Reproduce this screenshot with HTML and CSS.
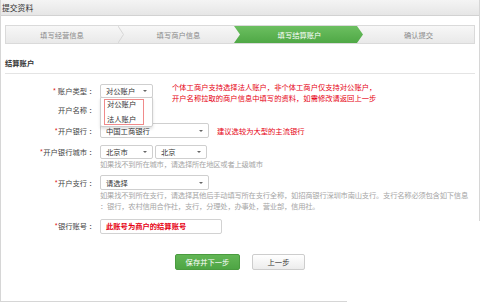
FILE: index.html
```html
<!DOCTYPE html>
<html lang="zh-CN">
<head>
    <meta charset="UTF-8">
    <meta name="viewport" content="width=device-width, initial-scale=1.0">
    <title>提交资料</title>
    <link rel="stylesheet" href="styles.css">
</head>
<body>
    <div class="panel">
        <div class="panel-head">提交资料</div>

        <div class="panel-body">
            <div class="steps">
                <div class="step">
                    <span class="step-text">填写经营信息</span>
                    <svg class="step-sep" width="6" height="17" viewBox="0 0 6 17"><polyline points="0,0 5.5,8.5 0,17" fill="none" stroke="#d6d6d6" stroke-width="1"/></svg>
                </div>
                <div class="step">
                    <span class="step-text">填写商户信息</span>
                </div>
                <div class="step step-active">
                    <span class="step-text">填写结算账户</span>
                </div>
                <div class="step">
                    <span class="step-text">确认提交</span>
                </div>
            </div>

            <h2 class="section-title">结算账户</h2>

            <div class="form">
                <div class="row row-fixed">
                    <label class="label"><span class="req">*</span> 账户类型 ：</label>
                    <div class="control">
                        <div class="select-wrap">
                            <div class="select select-sm"><span>对公账户</span><i class="caret"></i></div>
                            <div class="dropdown">
                                <div class="dropdown-mark">
                                    <div class="option">对公账户</div>
                                    <div class="option option-2">法人账户</div>
                                </div>
                            </div>
                        </div>
                        <p class="note note-wide">个体工商户支持选择法人账户，非个体工商户仅支持对公账户，<br>开户名称拉取的商户信息中填写的资料，如需修改请返回上一步</p>
                    </div>
                </div>

                <div class="row row-name">
                    <label class="label">开户名称 ：</label>
                    <div class="control"></div>
                </div>

                <div class="row row-bank">
                    <label class="label"><span class="req">*</span>开户银行 ：</label>
                    <div class="control">
                        <div class="select select-lg"><span>中国工商银行</span><i class="caret"></i></div>
                        <p class="note note-bank">建议选较为大型的主流银行</p>
                    </div>
                </div>

                <div class="row row-city">
                    <label class="label"><span class="req">*</span>开户银行城市 ：</label>
                    <div class="control-col">
                        <div class="control">
                            <div class="select select-sm"><span>北京市</span><i class="caret"></i></div>
                            <div class="select select-city"><span>北京</span><i class="caret"></i></div>
                        </div>
                        <p class="hint">如果找不到所在城市，请选择所在地区或者上级城市</p>
                    </div>
                </div>

                <div class="row row-branch">
                    <label class="label"><span class="req">*</span>开户支行 ：</label>
                    <div class="control-col">
                        <div class="control">
                            <div class="select select-lg"><span>请选择</span><i class="caret"></i></div>
                        </div>
                        <p class="hint">如果找不到所在支行，请选择其他后手动填写所在支行全称，如招商银行深圳市南山支行。支行名称必须包含如下信息<br>：银行，农村信用合作社，支行，分理处，办事处，营业部，信用社。</p>
                    </div>
                </div>

                <div class="row row-account">
                    <label class="label"><span class="req">*</span>银行账号 ：</label>
                    <div class="control">
                        <div class="input">此账号为商户的结算账号</div>
                    </div>
                </div>

                <div class="actions">
                    <button class="btn btn-primary">保存并下一步</button>
                    <button class="btn btn-default">上一步</button>
                </div>
            </div>
        </div>
    </div>
</body>
</html>
```

FILE: styles.css
```css
body {
    margin: 0;
    font-family: "Noto Sans CJK SC", "Liberation Sans", sans-serif;
    font-size: 7.3px;
    color: #444;
    background-color: #fff;
}

.panel {
    position: relative;
    width: 480px;
    height: 303px;
    box-sizing: border-box;
    border-left: 1px solid #d6d6d6;
}

/* the frame lines only run part way in the capture */
.panel::before {
    content: "";
    position: absolute;
    top: 0;
    right: 0;
    width: 1px;
    height: 222px;
    background-color: #d6d6d6;
}

.panel::after {
    content: "";
    position: absolute;
    left: 0;
    bottom: 0;
    width: 346px;
    height: 1px;
    background-color: #d6d6d6;
}

.panel-head {
    height: 17px;
    margin-top: -1px;
    line-height: 15px;
    padding-left: 1px;
    font-size: 7.8px;
    color: #333;
    background: linear-gradient(#f4f4f4, #e6e6e6);
    border-top: 1px solid #e2e2e2;
    border-bottom: 1px solid #d2d2d2;
    box-sizing: border-box;
}

.panel-body {
    padding: 9px 5px 0 4px;
}

.steps {
    display: grid;
    grid-template-columns: 117px 111px 129px 1fr;
    height: 17px;
    border: 1px solid #dadada;
    background: linear-gradient(#f7f7f7, #e9e9e9);
}

.step {
    display: flex;
    align-items: center;
    color: #8a8a8a;
}

.step-text {
    flex: 1;
    text-align: center;
}

.step-sep {
    flex: none;
    margin-right: -1px;
}

.step-active {
    color: #fff;
    background: linear-gradient(#6cbf60, #4fa846);
    clip-path: polygon(0 0, calc(100% - 6px) 0, 100% 50%, calc(100% - 6px) 100%, 0 100%, 6px 50%);
    padding-left: 2px;
}

.section-title {
    margin: 12px 0 0;
    padding-bottom: 3px;
    font-size: 7.3px;
    line-height: 14px;
    font-weight: bold;
    color: #333;
    border-bottom: 1px solid #e4e4e4;
}

.form {
    padding-top: 10px;
}

.row {
    display: grid;
    grid-template-columns: 91px 1fr;
    column-gap: 4px;
    align-items: start;
}

.row-fixed {
    height: 14px;
}

.row-name {
    margin-top: 5px;
    height: 14px;
}

.row-bank {
    margin-top: 7px;
}

.row-city {
    margin-top: 6px;
}

.row-branch {
    margin-top: 6px;
}

.row-account {
    margin-top: 7px;
}

.label {
    text-align: right;
    line-height: 14px;
    color: #444;
    white-space: nowrap;
}

.req {
    color: #e02020;
}

.control {
    display: flex;
    align-items: flex-start;
    gap: 2px;
}

.control-col {
    display: flex;
    flex-direction: column;
}

.select-wrap {
    position: relative;
}

.select {
    display: flex;
    align-items: center;
    justify-content: space-between;
    box-sizing: border-box;
    height: 14px;
    padding: 0 5px;
    border: 1px solid #cfcfcf;
    border-radius: 2px;
    background-color: #fff;
    color: #333;
}

.select-sm {
    width: 53px;
}

.select-city {
    width: 52px;
}

.select-lg {
    width: 109px;
    height: 15px;
    margin-top: -1px;
}

.caret {
    width: 0;
    height: 0;
    border-left: 2px solid transparent;
    border-right: 2px solid transparent;
    border-top: 2px solid #666;
}

.dropdown {
    position: absolute;
    top: 13px;
    left: 0;
    width: 53px;
    height: 30px;
    box-sizing: border-box;
    padding: 1px 0 0 3px;
    background-color: #fff;
    border: 1px solid #cfcfcf;
    border-radius: 0 0 2px 2px;
    box-shadow: 0 2px 3px rgba(0, 0, 0, 0.12);
}

.dropdown-mark {
    width: 40px;
    height: 26px;
    box-sizing: border-box;
    padding-left: 2px;
    border: 1px solid #f08a8a;
}

.option {
    line-height: 9px;
    color: #333;
}

.option-2 {
    margin-top: 6px;
}

.note {
    margin: 0;
    color: #e60012;
}

.note-wide {
    margin-top: -2px;
    margin-left: 17px;
    line-height: 11px;
}

.note-bank {
    margin-left: 6px;
    line-height: 15px;
}

.hint {
    margin: 0;
    line-height: 11px;
    letter-spacing: -0.22px;
    color: #a5a5a5;
    white-space: nowrap;
}

.input {
    box-sizing: border-box;
    width: 122px;
    height: 15px;
    line-height: 13px;
    padding-left: 5px;
    border: 1px solid #d2d2d2;
    border-radius: 2px;
    color: #e60012;
    font-weight: bold;
}

.actions {
    display: flex;
    gap: 12px;
    margin-top: 20px;
    padding-left: 170px;
}

.btn {
    height: 16px;
    padding: 0;
    font-family: inherit;
    font-size: 7.3px;
    border-radius: 2px;
    cursor: pointer;
}

.btn-primary {
    width: 65px;
    color: #fff;
    background: linear-gradient(#62b655, #4ea544);
    border: 1px solid #4a9b3f;
}

.btn-default {
    width: 53px;
    color: #333;
    background: linear-gradient(#fff, #ececec);
    border: 1px solid #cdcdcd;
}
```
